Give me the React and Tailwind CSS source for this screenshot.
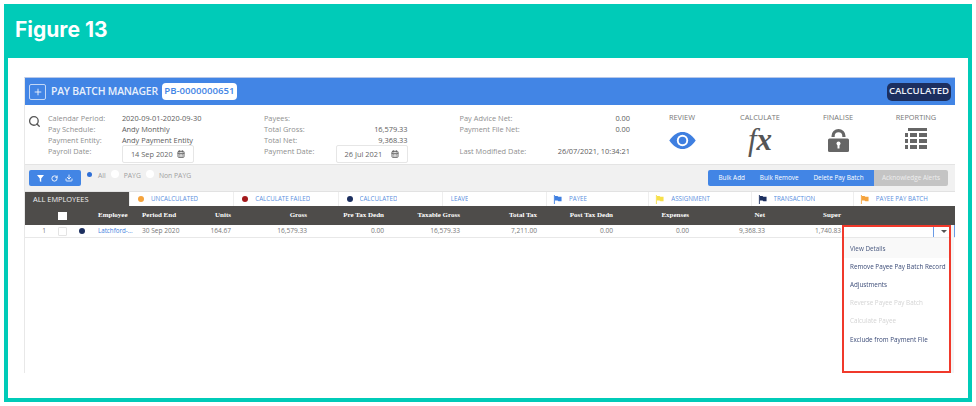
import { Search, Plus, RotateCw, Download, CalendarDays } from 'lucide-react'

const info1 = [
  ['Calendar Period:', '2020-09-01-2020-09-30'],
  ['Pay Schedule:', 'Andy Monthly'],
  ['Payment Entity:', 'Andy Payment Entity'],
]

const tabs = [
  { label: 'UNCALCULATED', dot: 'bg-[#f5a33c]' },
  { label: 'CALCULATE FAILED', dot: 'bg-[#a3191c]' },
  { label: 'CALCULATED', dot: 'bg-[#1c2f5f]' },
  { label: 'LEAVE' },
  { label: 'PAYEE', flag: 'text-[#3f7fe0]' },
  { label: 'ASSIGNMENT', flag: 'text-[#f7e04a]' },
  { label: 'TRANSACTION', flag: 'text-[#1c2f5f]' },
  { label: 'PAYEE PAY BATCH', flag: 'text-[#f5a33c]' },
]

const columns = ['Units', 'Gross', 'Pre Tax Dedn', 'Taxable Gross', 'Total Tax', 'Post Tax Dedn', 'Expenses', 'Net', 'Super']
const values = ['164.67', '16,579.33', '0.00', '16,579.33', '7,211.00', '0.00', '0.00', '9,368.33', '1,740.83']

const gridCols = 'grid grid-cols-[25px_25px_19px_44px_46px_47px_76px_77px_76px_77px_76px_76px_76px_76px_1fr]'

const menu = [
  { label: 'View Details', className: 'bg-[#f9f9f9] h-[20px] pt-[2px] text-[#4a5a80]' },
  { label: 'Remove Payee Pay Batch Record', className: 'h-[18px] text-[#3c4c78]' },
  { label: 'Adjustments', className: 'h-[18px] text-[#3c4c78]' },
  { label: 'Reverse Payee Pay Batch', className: 'h-[18px] text-[#d4d4d4]' },
  { label: 'Calculate Payee', className: 'h-[19px] text-[#d4d4d4]' },
  { label: 'Exclude from Payment File', className: 'h-[19px] text-[#3c4c78]' },
]

function Flag({ className }) {
  return (
    <svg viewBox="0 0 10 10" className={`w-[9px] h-[9px] ${className}`} fill="currentColor">
      <path d="M1 0h1v10H1z" />
      <path d="M2 1h3l1 1h3.5v5H6L5 6H2z" />
    </svg>
  )
}

function DateBox({ value }) {
  return (
    <div className="w-[72px] h-[18px] -mt-[1px] flex items-center justify-between px-[8px] bg-white border border-[#e6e6e6] rounded-[2px] text-[#666]">
      <span>{value}</span>
      <CalendarDays className="w-[8px] h-[8px] text-[#666]" strokeWidth={3} />
    </div>
  )
}

function Action({ label, children }) {
  return (
    <div className="w-[78px] flex flex-col items-center -mt-[1px]">
      <div className="text-[7.4px] leading-[11px] text-[#777]">{label}</div>
      <div className="h-[26px] mt-[4px] flex items-center justify-center">{children}</div>
    </div>
  )
}

export default function App() {
  return (
    <div className="w-[976px] h-[406px] bg-white p-[4px] overflow-hidden font-['Open_Sans',sans-serif]">
      <div className="h-[398px] w-[968px] border-[4px] border-t-0 border-[#00cbb8] flex flex-col">
        <div className="h-[54px] -mx-[4px] bg-[#00cbb8] pl-[11px] pt-[12px] text-white text-[21px] leading-[28px] font-bold font-['Inter',sans-serif]">
          Figure 13
        </div>

        <div className="pt-[19px] pl-[16px] pr-[13px] blur-[0.5px]">
          <div className="relative w-[931px] h-[296px] border-l border-[#e8e8e8] border-t border-t-[#b8c8e8] text-[7.4px]">
            {/* Title bar */}
            <div className="h-[27px] bg-[#4285e5] flex items-center px-[4px] text-white">
              <div className="w-[17px] h-[16px] border border-[#c4d8f6] rounded-[2px] flex items-center justify-center">
                <Plus className="w-[10px] h-[10px]" strokeWidth={2} />
              </div>
              <div className="ml-[5px] text-[10.4px] font-semibold tracking-[-0.2px] text-[#e8f0fc]">PAY BATCH MANAGER</div>
              <div className="ml-[4px] h-[17px] w-[75px] flex items-center justify-center bg-white rounded-[4px] text-[#4285e5] text-[9.6px] font-semibold whitespace-nowrap">
                PB-0000000651
              </div>
              <div className="ml-auto h-[18px] w-[64px] flex items-center justify-center bg-[#1c2f5f] rounded-[5px] text-[#eef2fa] text-[9.6px] font-semibold">
                CALCULATED
              </div>
            </div>

            {/* Summary */}
            <div className="h-[60px] flex bg-white border-b border-[#e4e4e4] leading-[11px] pt-[8px]">
              <Search className="ml-[3px] mt-[2px] w-[13px] h-[13px] text-[#555]" strokeWidth={2.4} />
              <div className="ml-[7px] w-[218px]">
                {info1.map(([k, v]) => (
                  <div key={k} className="flex">
                    <span className="w-[74px] text-[#8f8f8f]">{k}</span>
                    <span className="text-[#5c5c5c]">{v}</span>
                  </div>
                ))}
                <div className="flex">
                  <span className="w-[74px] text-[#8f8f8f]">Payroll Date:</span>
                  <DateBox value="14 Sep 2020" />
                </div>
              </div>
              <div className="w-[145px]">
                <div className="text-[#8f8f8f]">Payees:</div>
                <div className="flex justify-between"><span className="text-[#8f8f8f]">Total Gross:</span><span className="text-[#5c5c5c]">16,579.33</span></div>
                <div className="flex justify-between"><span className="text-[#8f8f8f]">Total Net:</span><span className="text-[#5c5c5c]">9,368.33</span></div>
                <div className="flex justify-between"><span className="text-[#8f8f8f]">Payment Date:</span><DateBox value="26 Jul 2021" /></div>
              </div>
              <div className="ml-[52px] w-[172px]">
                <div className="flex justify-between"><span className="text-[#8f8f8f]">Pay Advice Net:</span><span className="text-[#5c5c5c]">0.00</span></div>
                <div className="flex justify-between"><span className="text-[#8f8f8f]">Payment File Net:</span><span className="text-[#5c5c5c]">0.00</span></div>
                <div className="h-[11px]" />
                <div className="flex justify-between"><span className="text-[#8f8f8f]">Last Modified Date:</span><span className="text-[#5c5c5c]">26/07/2021, 10:34:21</span></div>
              </div>
              <div className="ml-[13px] flex">
                <Action label="REVIEW">
                  <svg viewBox="0 0 28 18" className="w-[27px] h-[17px]">
                    <path d="M0 9C5 2.500 9 0 14 0s9 2.500 14 9c-5 6.500-9 9-14 9S5 15.500 0 9z" fill="#3f7fe0" />
                    <circle cx="14" cy="9" r="6" fill="#fff" />
                    <circle cx="14" cy="9" r="4" fill="#3f7fe0" />
                  </svg>
                </Action>
                <Action label="CALCULATE">
                  <span className="font-['Liberation_Serif',serif] italic text-[31px] leading-[26px] text-[#555]">
                    f<span className="font-bold">x</span>
                  </span>
                </Action>
                <Action label="FINALISE">
                  <svg viewBox="0 0 21 24" className="w-[21px] h-[24px]">
                    <path d="M3.500 9V8a7 7 0 0 1 14 0v1h-3.200V8a3.800 3.800 0 0 0-7.600 0v1z" fill="#666" />
                    <rect x="0" y="10.500" width="21" height="13.500" rx="1.500" fill="#666" />
                    <circle cx="10.500" cy="15.500" r="2" fill="#fff" />
                    <rect x="9.500" y="16" width="2" height="4.500" fill="#fff" />
                  </svg>
                </Action>
                <Action label="REPORTING">
                  <svg viewBox="0 0 22 24" className="w-[22px] h-[24px]" fill="#666">
                    <rect x="3" y="0" width="19" height="3" />
                    <rect x="0" y="5" width="3" height="4" /><rect x="5" y="5" width="7" height="4" /><rect x="14" y="5" width="8" height="4" />
                    <rect x="0" y="11" width="3" height="4" /><rect x="5" y="11" width="7" height="4" /><rect x="14" y="11" width="8" height="4" />
                    <rect x="0" y="17" width="3" height="4" /><rect x="5" y="17" width="7" height="4" /><rect x="14" y="17" width="8" height="4" />
                  </svg>
                </Action>
              </div>
            </div>

            {/* Toolbar */}
            <div className="h-[27px] bg-[#f1f1f1] border-b border-[#e2e2e2] flex pl-[4px] pr-[7px] pt-[5px]">
              <div className="w-[52px] h-[16px] bg-[#4285e5] rounded-[2px] flex items-center justify-around px-[4px] text-white">
                <svg viewBox="0 0 10 10" className="w-[7px] h-[7px]" fill="currentColor"><path d="M0 0h10L6 5v5L4 9V5z" /></svg>
                <RotateCw className="w-[7px] h-[7px]" strokeWidth={3} />
                <Download className="w-[8px] h-[8px]" strokeWidth={2.500} />
              </div>
              <div className="ml-[6px] mt-[1px] flex items-start text-[#a0a0a0] text-[6.8px] leading-[10px]">
                <span className="w-[5px] h-[5px] mt-[1px] rounded-full bg-[#2f6fd6]" />
                <span className="ml-[6px]">All</span>
                <span className="ml-[5px] -mt-[1px] w-[8px] h-[8px] rounded-full bg-white" />
                <span className="ml-[5px]">PAYG</span>
                <span className="ml-[5px] -mt-[1px] w-[8px] h-[8px] rounded-full bg-white" />
                <span className="ml-[5px]">Non PAYG</span>
              </div>
              <div className="ml-auto flex h-[16px] text-[6.4px] text-white font-medium">
                <div className="flex items-center w-[166px] justify-around px-[3px] bg-[#4285e5] rounded-l-[2px]">
                  <span>Bulk Add</span>
                  <span>Bulk Remove</span>
                  <span>Delete Pay Batch</span>
                </div>
                <div className="w-[74px] flex items-center justify-center bg-[#c4c4c4] text-[#eee] rounded-r-[2px]">Acknowledge Alerts</div>
              </div>
            </div>

            {/* Tabs */}
            <div className="h-[14px] flex bg-[#eeeeee] text-[#5b8fe0] text-[6.2px] leading-[14px]">
              <div className="w-[104px] mr-[1px] bg-[#4e4c4a] pl-[8px] text-[7.4px] text-[#f0f0f0] whitespace-nowrap">ALL EMPLOYEES</div>
              {tabs.map(t => (
                <div key={t.label} className={`flex-1 mr-[1px] last:mr-0 bg-white flex items-center ${t.flag ? 'pl-[6px]' : 'pl-[8px]'}`}>
                  {t.dot && <span className={`w-[6px] h-[6px] rounded-full mr-[7px] ${t.dot}`} />}
                  {t.flag && <span className="mr-[7px]"><Flag className={t.flag} /></span>}
                  <span className="truncate">{t.label}</span>
                </div>
              ))}
            </div>

            {/* Table header */}
            <div className={`${gridCols} h-[19px] items-center bg-[#4e4c4a] text-white text-[7px] font-bold font-['Liberation_Serif',serif]`}>
              <span />
              <span className="w-[9px] h-[8px] ml-[8px] bg-white" />
              <span />
              <span className="pl-[4px]">Employee</span>
              <span className="pl-[4px] whitespace-nowrap">Period End</span>
              {columns.map(c => (
                <span key={c} className="text-right whitespace-nowrap">{c}</span>
              ))}
              <span />
            </div>

            {/* Row */}
            <div className={`${gridCols} h-[13px] items-center bg-white border-b border-[#e8e8e8] text-[#777] text-[6.6px]`}>
              <span className="text-right pr-[4px]">1</span>
              <span className="w-[9px] h-[9px] ml-[8px] border border-[#e4e4e4] rounded-[1px]" />
              <span className="w-[6px] h-[6px] ml-[4px] rounded-full bg-[#1c2f5f]" />
              <span className="pl-[4px] text-[6.2px] text-[#3f7fe0] whitespace-nowrap">Latchford-...</span>
              <span className="pl-[4px] whitespace-nowrap">30 Sep 2020</span>
              {values.map((v, i) => (
                <span key={i} className="text-right">{v}</span>
              ))}
              <div className="h-[12px] flex justify-end">
                <div className="w-[22px] border-x border-[#6a9be6] flex items-center justify-center">
                  <span className="w-0 h-0 border-x-[3px] border-x-transparent border-t-[3px] border-t-[#555]" />
                </div>
              </div>
            </div>

            {/* Row action menu */}
            <div className="absolute left-[817px] top-[147px] w-[109px] h-[148px] border-2 border-[#f0392b] text-[6.3px] leading-[18px] z-10 shadow-[3px_0_0_#f5f5f5]">
              <div className="mt-[11px]">
                {menu.map(m => (
                  <div key={m.label} className={`pl-[6px] whitespace-nowrap ${m.className}`}>{m.label}</div>
                ))}
              </div>
            </div>
          </div>
        </div>
      </div>
    </div>
  )
}
